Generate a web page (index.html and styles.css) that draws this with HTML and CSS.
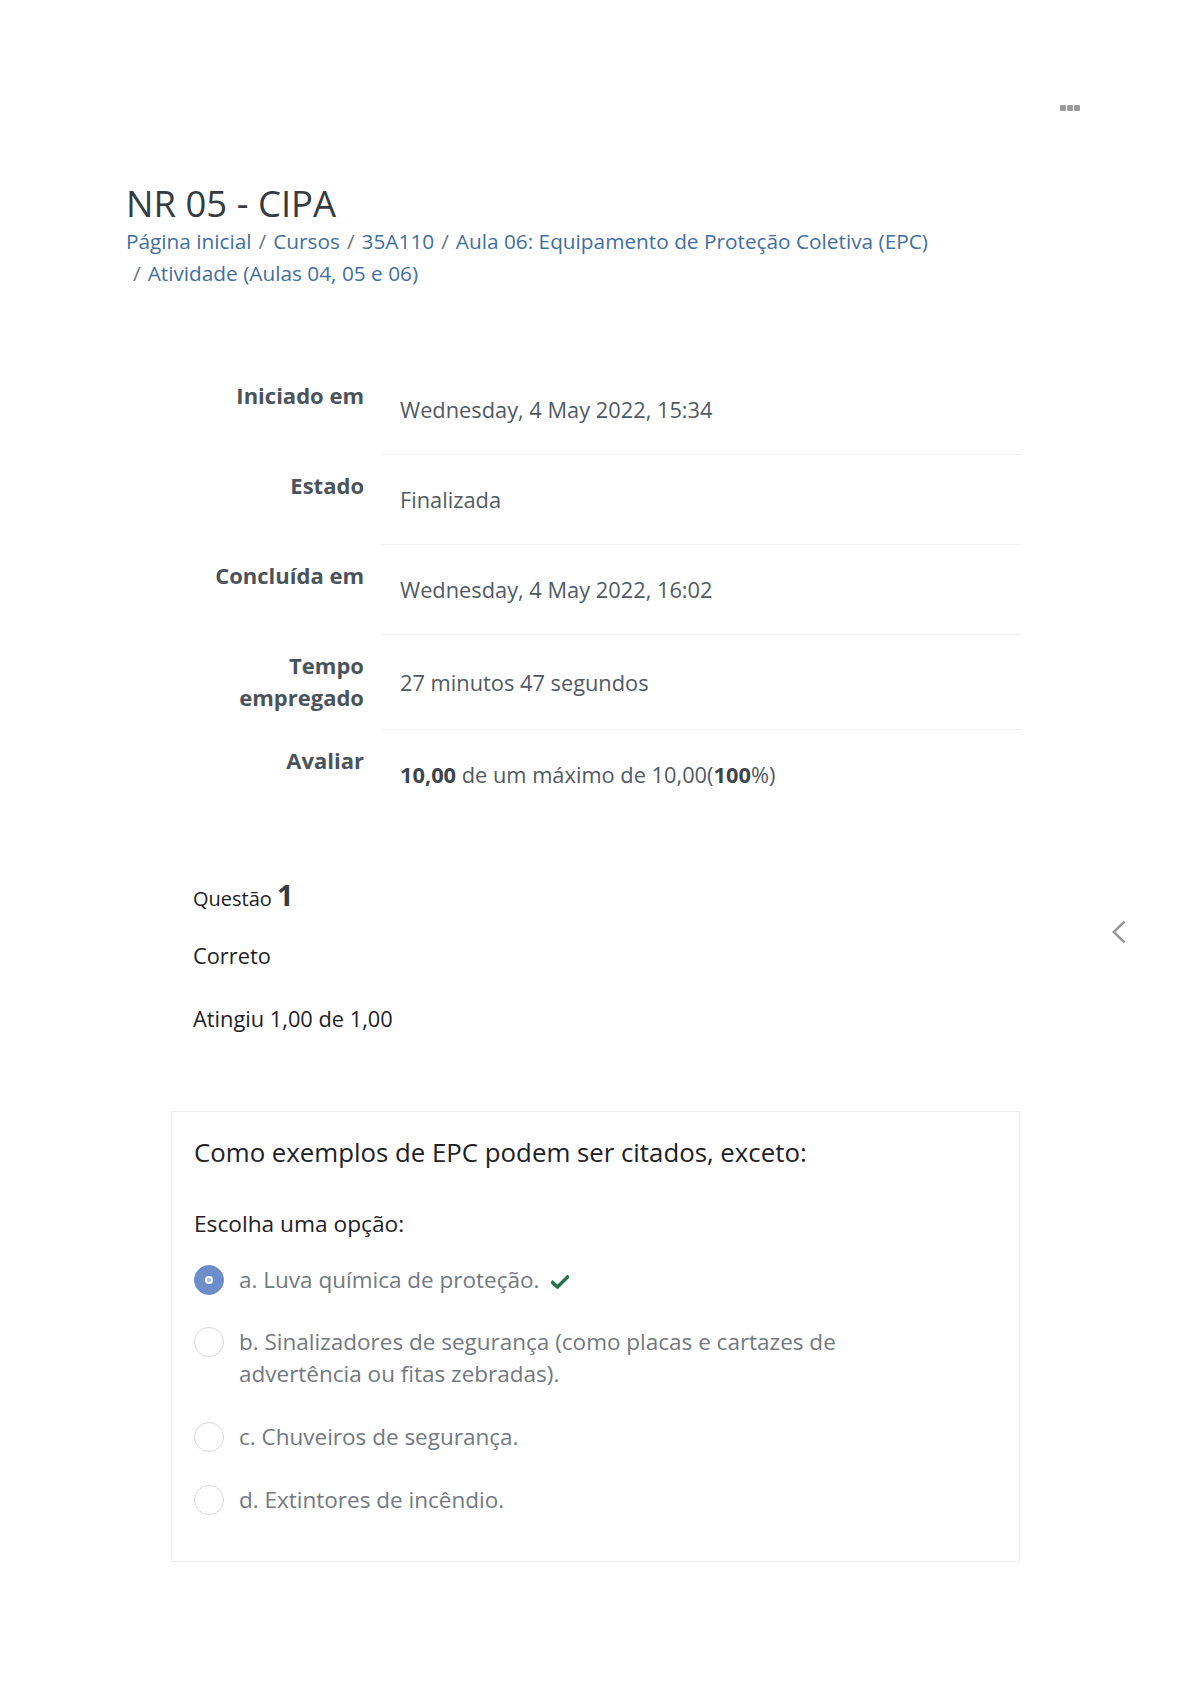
FILE: index.html
```html
<!DOCTYPE html>
<html lang="pt-BR">
<head>
<meta charset="utf-8">
<title>NR 05 - CIPA</title>
<link rel="stylesheet" href="styles.css">
</head>
<body>
<div class="page">
  <div class="topbar">
    <span class="menu-dots" aria-label="Menu">
      <svg width="20" height="6" viewBox="0 0 20 6"><rect x="0" y="0" width="6" height="6" rx="1.2" fill="#9a9a9a"/><rect x="7" y="0" width="6" height="6" rx="1.2" fill="#9a9a9a"/><rect x="14" y="0" width="6" height="6" rx="1.2" fill="#9a9a9a"/></svg>
    </span>
  </div>

  <header class="page-header">
    <h1 class="title">NR 05 - CIPA</h1>
    <ol class="breadcrumb">
      <li class="crumb">Página inicial</li>
      <li class="crumb">Cursos</li>
      <li class="crumb">35A110</li>
      <li class="crumb">Aula 06: Equipamento de Proteção Coletiva (EPC)</li>
      <li class="crumb">Atividade (Aulas 04, 05 e 06)</li>
    </ol>
  </header>

  <table class="summary">
    <tbody>
      <tr><th>Iniciado em</th><td>Wednesday, 4 May 2022, 15:34</td></tr>
      <tr><th>Estado</th><td>Finalizada</td></tr>
      <tr><th>Concluída em</th><td>Wednesday, 4 May 2022, 16:02</td></tr>
      <tr><th>Tempo empregado</th><td>27 minutos 47 segundos</td></tr>
      <tr><th>Avaliar</th><td><b>10,00</b> de um máximo de 10,00(<b>100</b>%)</td></tr>
    </tbody>
  </table>

  <section class="que">
    <div class="info">
      <h3 class="qno">Questão <span class="qnum">1</span></h3>
      <div class="state">Correto</div>
      <div class="grade">Atingiu 1,00 de 1,00</div>
    </div>
    <div class="content">
      <div class="qtext">Como exemplos de EPC podem ser citados, exceto:</div>
      <div class="prompt">Escolha uma opção:</div>
      <div class="answers">
        <div class="option">
          <span class="radio checked"></span>
          <span class="label">a. Luva química de proteção. <svg class="tick" width="18" height="14" viewBox="0 0 18 14"><path d="M1.5 7.5 L6.5 12 L16.5 2" fill="none" stroke="#24704d" stroke-width="3.4" stroke-linecap="square"/></svg></span>
        </div>
        <div class="option">
          <span class="radio"></span>
          <span class="label">b. Sinalizadores de segurança (como placas e cartazes de advertência ou fitas zebradas).</span>
        </div>
        <div class="option">
          <span class="radio"></span>
          <span class="label">c. Chuveiros de segurança.</span>
        </div>
        <div class="option">
          <span class="radio"></span>
          <span class="label">d. Extintores de incêndio.</span>
        </div>
      </div>
    </div>
  </section>

  <button class="drawer-toggle" aria-label="Abrir">
    <svg width="14" height="24" viewBox="0 0 14 24"><polyline points="12.5,1.5 1.8,12 12.5,22.5" fill="none" stroke="#9a9a9a" stroke-width="2.6"/></svg>
  </button>
</div>
</body>
</html>
```

FILE: styles.css
```css
html, body {
  margin: 0;
  padding: 0;
  background: #ffffff;
}

body {
  font-family: "Open Sans", "Noto Sans", sans-serif;
  color: #1d2125;
}

.page {
  position: relative;
  width: 1190px;
  min-height: 1684px;
  box-sizing: border-box;
  padding: 0 126px 0 126px;
}

.topbar {
  display: flex;
  justify-content: flex-end;
  padding-top: 105px;
  margin-right: -16px;
  height: 6px;
}

.menu-dots {
  display: block;
  width: 20px;
  height: 6px;
  line-height: 0;
}

.page-header {
  margin-top: 71px;
}

.title {
  margin: 0;
  font-size: 36.5px;
  line-height: 43px;
  font-weight: 400;
  color: #343b42;
}

.breadcrumb {
  list-style: none;
  margin: 0;
  padding: 0;
  display: flex;
  flex-wrap: wrap;
  font-size: 20.8px;
  line-height: 32px;
  color: #3f6f9f;
}

.crumb + .crumb {
  padding-left: 7px;
}

.crumb + .crumb::before {
  content: "/";
  color: #6c757d;
  padding-right: 7px;
}

.summary {
  margin: 76px 0 0 78px;
  border-collapse: collapse;
  table-layout: fixed;
  width: 816px;
}

.summary th {
  width: 160px;
  padding: 14px 17px 17px 0;
  text-align: right;
  vertical-align: top;
  font-size: 22px;
  line-height: 32px;
  font-weight: 700;
  color: #4a535b;
}

.summary td {
  padding: 29px 0 28px 19px;
  vertical-align: middle;
  font-size: 21.8px;
  line-height: 32px;
  color: #515a63;
}

.summary tr + tr td {
  border-top: 1px solid #eef1f3;
}

.summary td b {
  font-weight: 700;
  color: #3d454c;
}

.que {
  margin: 58px 0 0 45px;
  width: 849px;
}

.info {
  padding-left: 22px;
}

.qno {
  margin: 0;
  font-size: 20px;
  line-height: 36px;
  font-weight: 400;
  color: #1d2125;
}

.qnum {
  font-size: 29px;
  font-weight: 700;
  color: #343b42;
}

.state {
  margin-top: 23px;
  font-size: 21.8px;
  line-height: 32px;
  color: #1d2125;
}

.grade {
  margin-top: 31px;
  font-size: 21.8px;
  line-height: 32px;
  color: #1d2125;
}

.content {
  margin-top: 76px;
  border: 1px solid #eceff1;
  padding: 22px 22px 30px 22px;
}

.qtext {
  font-size: 25.8px;
  line-height: 36px;
  color: #1d2125;
}

.prompt {
  margin-top: 38px;
  font-size: 22.7px;
  line-height: 32px;
  color: #1d2125;
}

.answers {
  margin-top: 9px;
}

.option {
  display: flex;
  align-items: flex-start;
  padding: 15px 0;
}

.option + .option + .option {
  padding-top: 16px;
}

.radio {
  flex: none;
  box-sizing: border-box;
  width: 30px;
  height: 30px;
  margin-top: 1px;
  margin-right: 15px;
  border-radius: 50%;
  border: 1.5px solid #d9d9d9;
  background: #ffffff;
  position: relative;
}

.radio.checked {
  border-color: #6d8fc9;
  background: #6d8fc9;
}

.radio.checked::after {
  content: "";
  position: absolute;
  left: 50%;
  top: 50%;
  width: 4px;
  height: 4px;
  margin: -4px 0 0 -4px;
  border: 2px solid #ffffff;
  border-radius: 50%;
  background: #a9bde0;
}

.label {
  max-width: 640px;
  font-size: 22.5px;
  line-height: 32px;
  color: #727980;
}

.tick {
  margin-left: 6px;
  vertical-align: -1px;
}

.drawer-toggle {
  position: absolute;
  left: 1112px;
  top: 920px;
  padding: 0;
  margin: 0;
  border: 0;
  background: transparent;
  line-height: 0;
}
```
